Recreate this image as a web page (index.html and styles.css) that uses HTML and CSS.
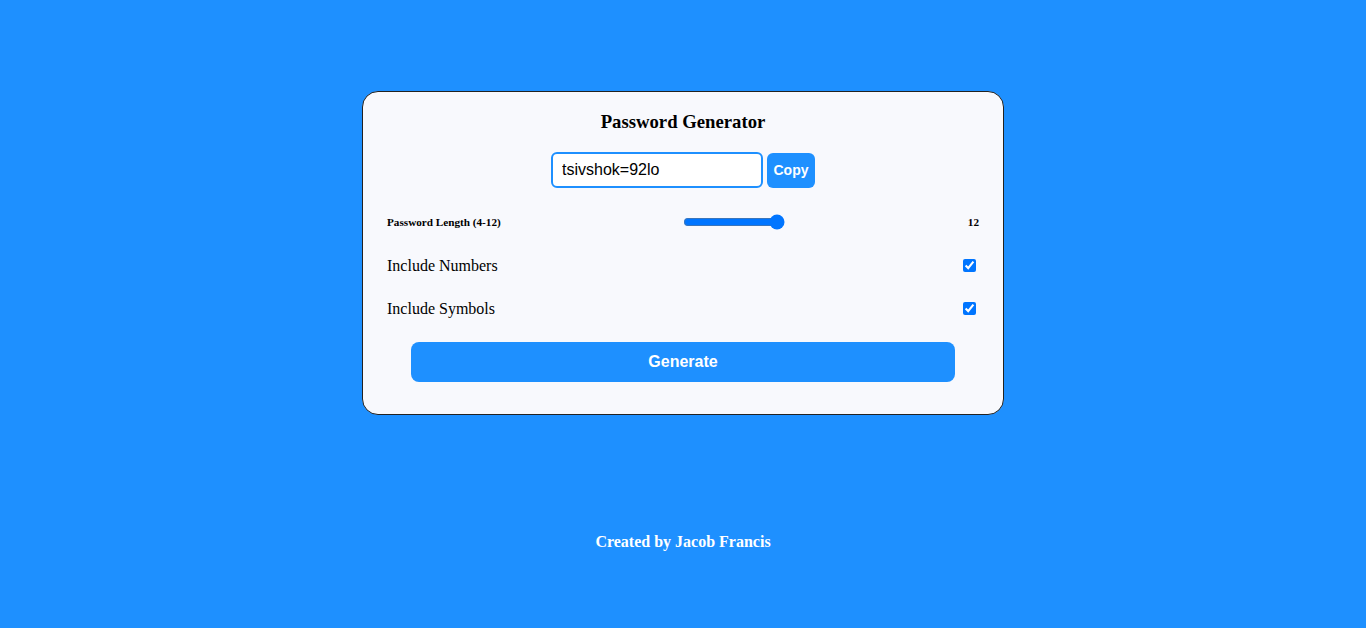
FILE: index.html
```html
<!DOCTYPE html>
<html lang="en">
<head>
<meta charset="UTF-8">
<title>Password Generator</title>
<link rel="stylesheet" href="styles.css">
</head>
<body>
<main class="page">
  <section class="card">
    <h3 class="title">Password Generator</h3>
    <div class="result">
      <input class="result-input" type="text" value="tsivshok=92lo" readonly>
      <button class="copy-btn">Copy</button>
    </div>
    <div class="row row-length">
      <label class="small-label" for="len">Password Length (4-12)</label>
      <input id="len" class="range" type="range" min="4" max="12" value="12">
      <span class="small-label">12</span>
    </div>
    <div class="row">
      <label for="num">Include Numbers</label>
      <input id="num" type="checkbox" checked>
    </div>
    <div class="row">
      <label for="sym">Include Symbols</label>
      <input id="sym" type="checkbox" checked>
    </div>
    <button class="generate-btn">Generate</button>
  </section>
  <footer class="footer">Created by Jacob Francis</footer>
</main>
</body>
</html>
```
FILE: styles.css
```css
html, body {
  margin: 0;
  padding: 0;
}
body {
  background: #1e90ff;
  font-family: "Liberation Serif", "Times New Roman", serif;
  color: #000;
  height: 628px;
}
.page {
  display: flex;
  flex-direction: column;
  align-items: center;
  padding-top: 91px;
}
.card {
  width: 592px;
  background: #f8f9fd;
  border: 1px solid #222;
  border-radius: 16px;
  padding: 19px 24px 32px;
  display: flex;
  flex-direction: column;
  align-items: center;
}
.title {
  margin: 0;
  font-size: 18.72px;
  font-weight: bold;
  line-height: 22px;
}
.result {
  display: flex;
  align-items: center;
  gap: 4px;
  margin-top: 19px;
}
.result-input {
  box-sizing: border-box;
  width: 212px;
  height: 36px;
  border: 2px solid #1e90ff;
  border-radius: 6px;
  padding: 0 9px;
  font-family: "Liberation Sans", Arial, sans-serif;
  font-size: 16px;
  color: #000;
  background: #fff;
  outline: none;
}
.copy-btn {
  box-sizing: border-box;
  height: 35px;
  width: 48px;
  border: none;
  border-radius: 6px;
  background: #1e90ff;
  color: #fff;
  font-family: "Liberation Sans", Arial, sans-serif;
  font-weight: bold;
  font-size: 14px;
  padding: 0;
}
.row {
  width: 100%;
  height: 43px;
  display: flex;
  justify-content: space-between;
  align-items: center;
  font-size: 16px;
}
.row-length {
  margin-top: 12px;
  height: 44px;
}
.small-label {
  font-size: 11.2px;
  font-weight: bold;
}
.range {
  width: 102px;
  margin: 0;
}
.generate-btn {
  margin-top: 12px;
  width: 544px;
  height: 40px;
  border: none;
  border-radius: 8px;
  background: #1e90ff;
  color: #fff;
  font-family: "Liberation Sans", Arial, sans-serif;
  font-weight: bold;
  font-size: 16px;
}
.footer {
  margin-top: 118px;
  color: #fff;
  font-weight: bold;
  font-size: 16px;
  line-height: 18px;
}
```
